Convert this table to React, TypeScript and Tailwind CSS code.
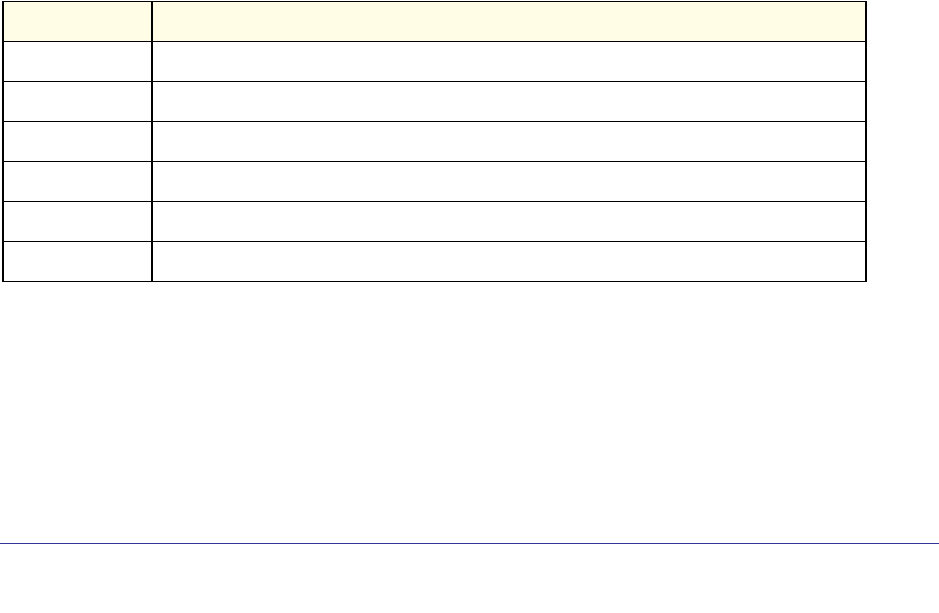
export default function App() {
  const rows = [0, 1, 2, 3, 4, 5];

  return (
    <div className="min-h-screen bg-white pt-[1px]">
      {/* Table */}
      <div className="ml-[2px] w-[865px] border-t border-x-2 border-black">
        <div className="flex h-[40px] border-b border-black bg-[#fffde6]">
          <div className="w-[149px] border-r-2 border-black" />
          <div className="flex-1" />
        </div>
        {rows.map((r) => (
          <div key={r} className="flex h-[40px] border-b border-black">
            <div className="w-[149px] border-r-2 border-black" />
            <div className="flex-1" />
          </div>
        ))}
      </div>

      {/* Footer rule */}
      <div className="mt-[261px] h-px w-full bg-[#333399]" />
    </div>
  );
}
